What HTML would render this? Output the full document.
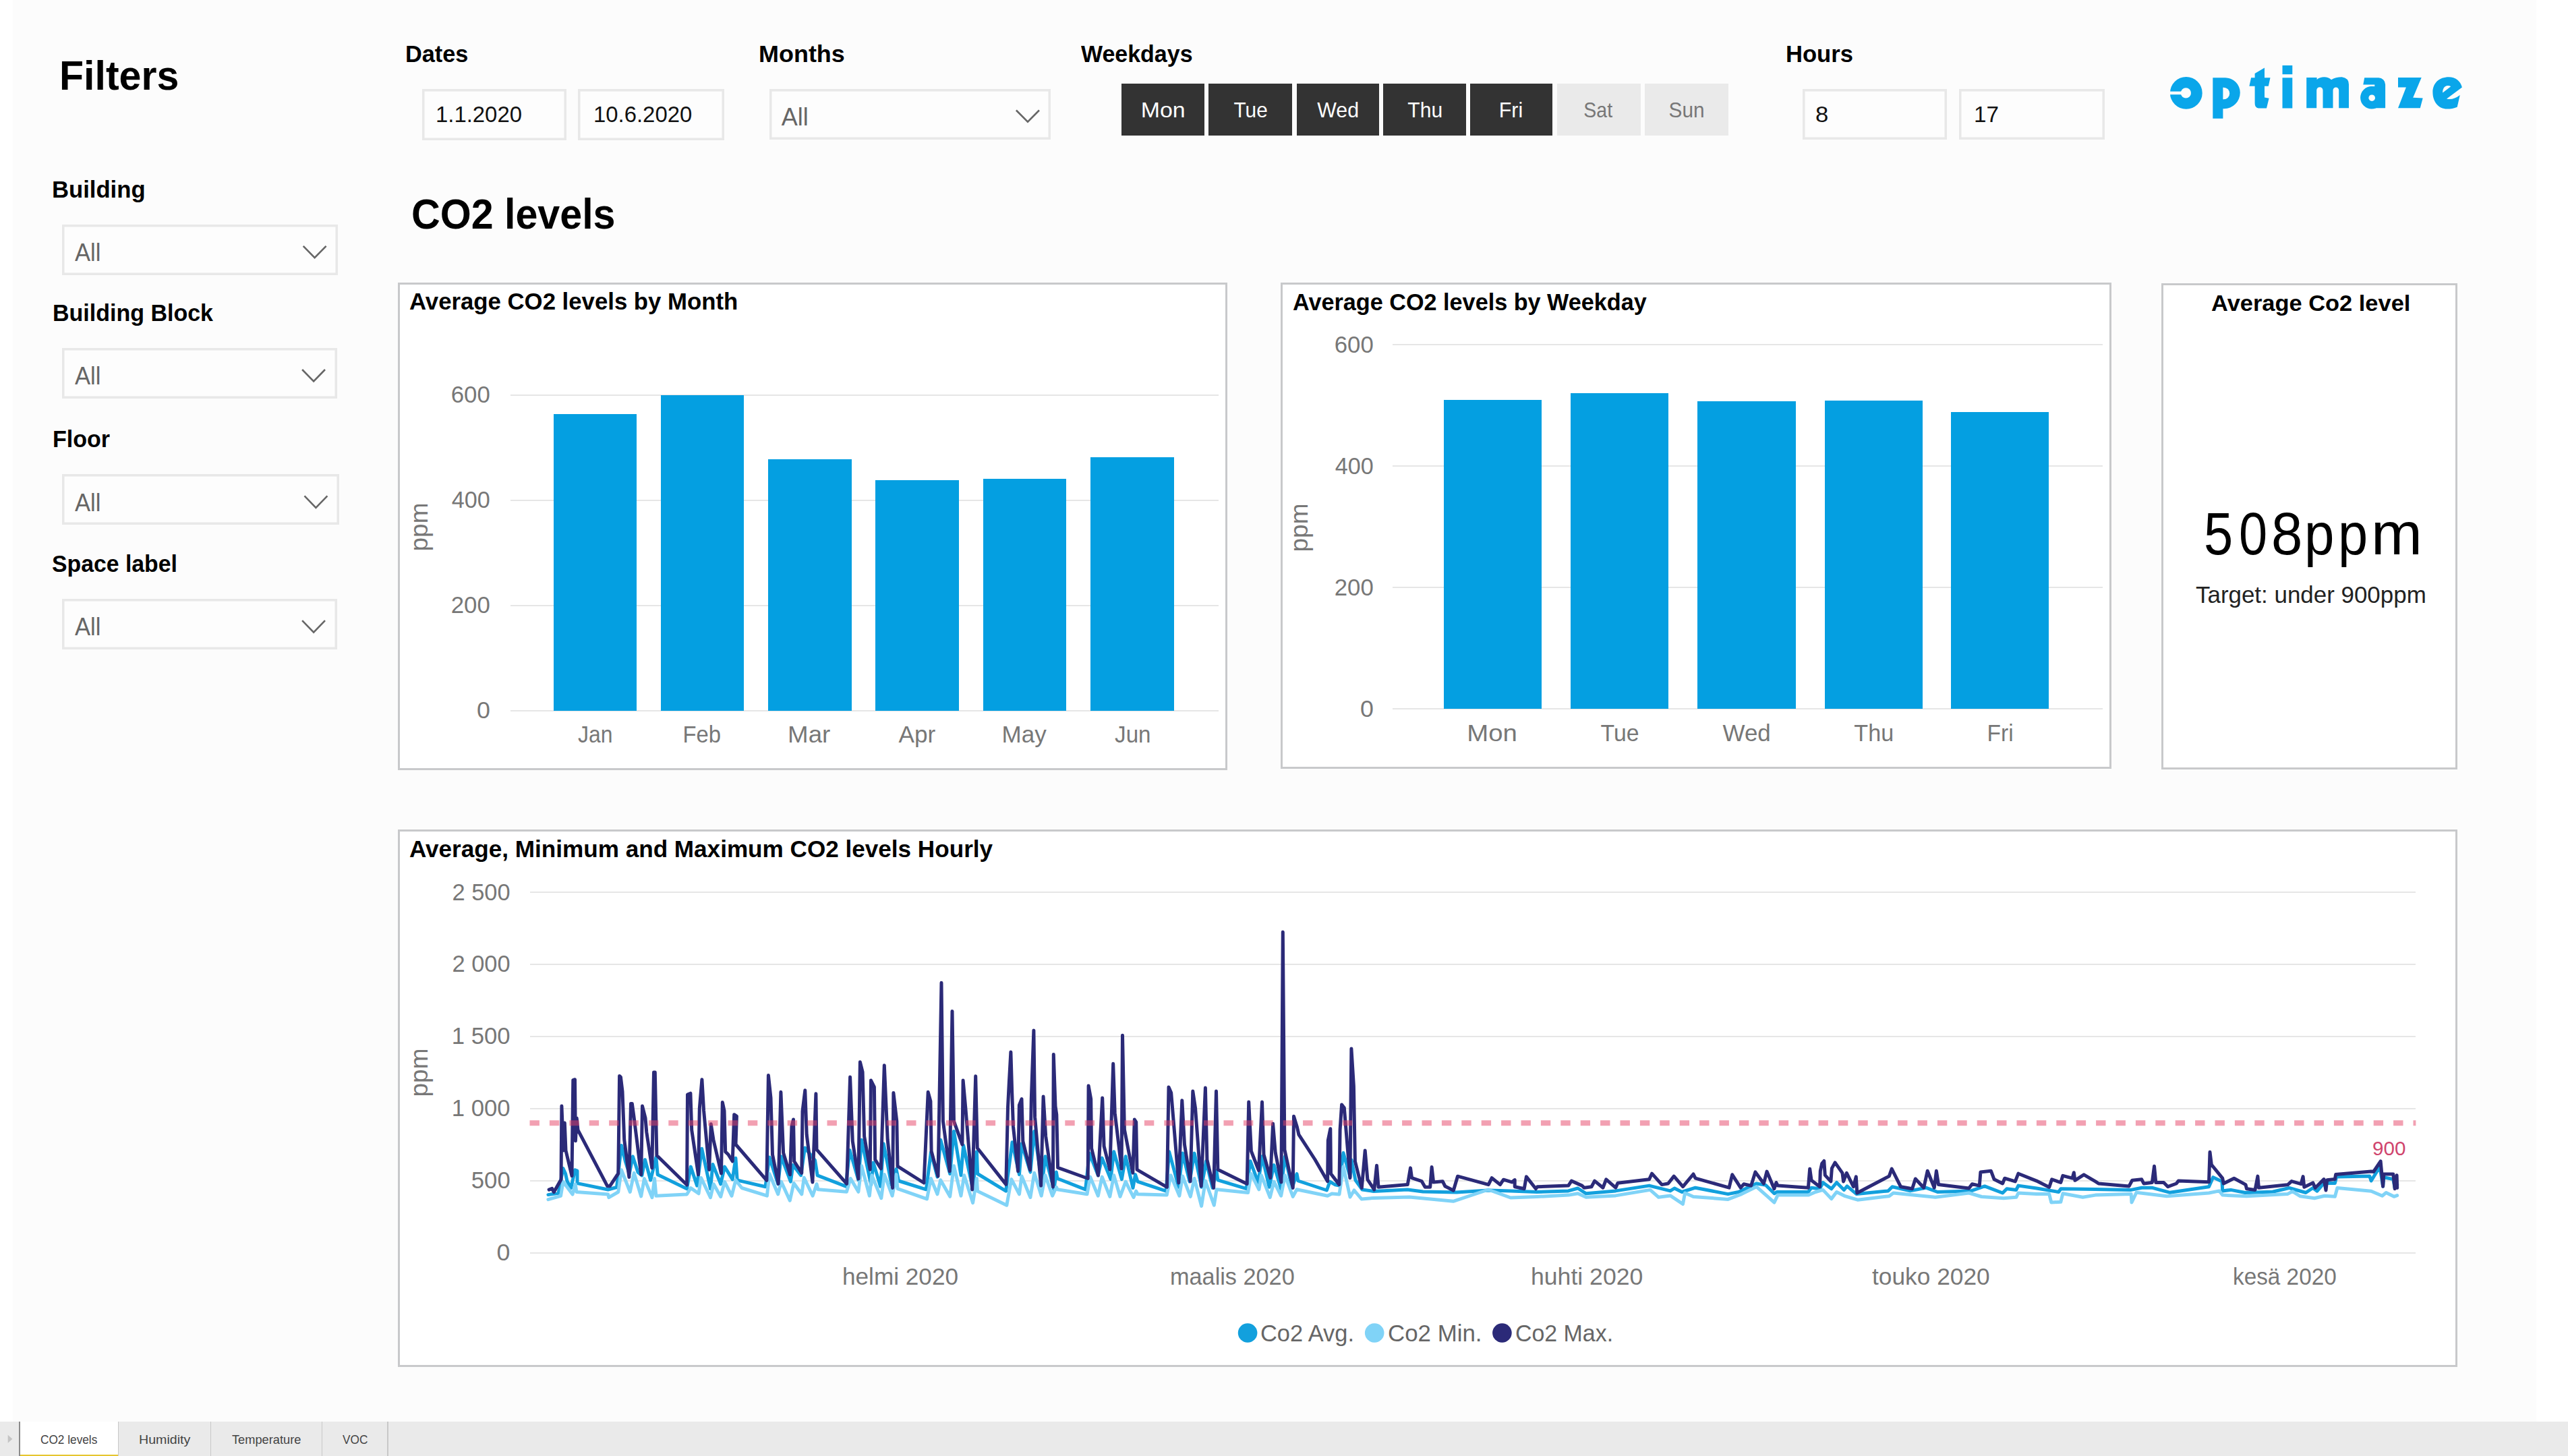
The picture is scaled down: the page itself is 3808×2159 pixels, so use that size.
<!DOCTYPE html>
<html><head><meta charset="utf-8"><title>CO2 levels</title>
<style>
html,body{margin:0;padding:0;}
body{width:3808px;height:2159px;position:relative;overflow:hidden;background:#ffffff;font-family:"Liberation Sans",sans-serif;}
.r{position:absolute;}
.t{position:absolute;line-height:1;white-space:nowrap;}
.t span{display:inline-block;}
svg.ov{position:absolute;left:0;top:0;}
</style></head><body>
<div class="r" style="left:19.0px;top:0.0px;width:3742.0px;height:2108.0px;background:#fcfcfc;"></div>
<div class="t" id="t_filters" style="left:88.3px;top:81.7px;font-size:60.60px;font-weight:700;color:#000;"><span style="transform:scaleX(0.9750);transform-origin:left;">Filters</span></div>
<div class="t" id="t_dates" style="left:601.3px;top:63.4px;font-size:35.50px;font-weight:700;color:#000;"><span style="transform:scaleX(0.9656);transform-origin:left;">Dates</span></div>
<div class="t" id="t_months" style="left:1125.4px;top:63.1px;font-size:35.50px;font-weight:700;color:#000;"><span style="transform:scaleX(1.0131);transform-origin:left;">Months</span></div>
<div class="t" id="t_weekdays" style="left:1602.8px;top:63.2px;font-size:35.50px;font-weight:700;color:#000;"><span style="transform:scaleX(0.9567);transform-origin:left;">Weekdays</span></div>
<div class="t" id="t_hours" style="left:2648.1px;top:63.2px;font-size:35.50px;font-weight:700;color:#000;"><span style="transform:scaleX(0.9747);transform-origin:left;">Hours</span></div>
<div class="r" style="left:625.6px;top:131.7px;width:214.1px;height:75.9px;background:#fdfdfd;box-shadow:inset 0 0 0 3.5px #e8e8e8;"></div>
<div class="r" style="left:857.3px;top:131.7px;width:216.6px;height:75.9px;background:#fdfdfd;box-shadow:inset 0 0 0 3.5px #e8e8e8;"></div>
<div class="t" id="t_d1" style="left:645.8px;top:153.3px;font-size:33.80px;font-weight:400;color:#111;"><span style="transform:scaleX(0.9727);transform-origin:left;">1.1.2020</span></div>
<div class="t" id="t_d2" style="left:879.5px;top:153.3px;font-size:33.80px;font-weight:400;color:#111;"><span style="transform:scaleX(0.9728);transform-origin:left;">10.6.2020</span></div>
<div class="r" style="left:1141.3px;top:131.5px;width:416.3px;height:75.5px;background:#fdfdfd;box-shadow:inset 0 0 0 3.5px #e8e8e8;"></div>
<div class="t" id="t_mall" style="left:1158.8px;top:155.5px;font-size:36.00px;font-weight:400;color:#666;"><span style="">All</span></div>
<div class="r" style="left:1663.2px;top:123.6px;width:122.6px;height:77.6px;background:#333333;"></div>
<div class="t" id="t_day_Mon" style="left:724.5px;width:2000px;top:147.5px;text-align:center;font-size:31.60px;font-weight:400;color:#ffffff;"><span style="transform:scaleX(1.0737);transform-origin:center;">Mon</span></div>
<div class="r" style="left:1792.1px;top:123.6px;width:124.3px;height:77.6px;background:#333333;"></div>
<div class="t" id="t_day_Tue" style="left:854.4px;width:2000px;top:147.5px;text-align:center;font-size:31.60px;font-weight:400;color:#ffffff;"><span style="transform:scaleX(0.9423);transform-origin:center;">Tue</span></div>
<div class="r" style="left:1922.5px;top:123.6px;width:122.5px;height:77.6px;background:#333333;"></div>
<div class="t" id="t_day_Wed" style="left:984.5px;width:2000px;top:147.5px;text-align:center;font-size:31.60px;font-weight:400;color:#ffffff;"><span style="transform:scaleX(0.9613);transform-origin:center;">Wed</span></div>
<div class="r" style="left:2051.3px;top:123.6px;width:122.6px;height:77.6px;background:#333333;"></div>
<div class="t" id="t_day_Thu" style="left:1113.2px;width:2000px;top:147.5px;text-align:center;font-size:31.60px;font-weight:400;color:#ffffff;"><span style="transform:scaleX(0.9519);transform-origin:center;">Thu</span></div>
<div class="r" style="left:2180.1px;top:123.6px;width:122.4px;height:77.6px;background:#333333;"></div>
<div class="t" id="t_day_Fri" style="left:1240.6px;width:2000px;top:147.5px;text-align:center;font-size:31.60px;font-weight:400;color:#ffffff;"><span style="transform:scaleX(0.9625);transform-origin:center;">Fri</span></div>
<div class="r" style="left:2308.6px;top:123.6px;width:124.3px;height:77.6px;background:#eaeaea;"></div>
<div class="t" id="t_day_Sat" style="left:1369.7px;width:2000px;top:147.5px;text-align:center;font-size:31.60px;font-weight:400;color:#777777;"><span style="transform:scaleX(0.9000);transform-origin:center;">Sat</span></div>
<div class="r" style="left:2439.2px;top:123.6px;width:123.6px;height:77.6px;background:#eaeaea;"></div>
<div class="t" id="t_day_Sun" style="left:1501.0px;width:2000px;top:147.5px;text-align:center;font-size:31.60px;font-weight:400;color:#777777;"><span style="transform:scaleX(0.9423);transform-origin:center;">Sun</span></div>
<div class="r" style="left:2672.7px;top:131.8px;width:214.0px;height:75.5px;background:#fdfdfd;box-shadow:inset 0 0 0 3.5px #e8e8e8;"></div>
<div class="r" style="left:2904.7px;top:131.8px;width:215.9px;height:75.5px;background:#fdfdfd;box-shadow:inset 0 0 0 3.5px #e8e8e8;"></div>
<div class="t" id="t_h1" style="left:2691.6px;top:152.8px;font-size:33.80px;font-weight:400;color:#111;"><span style="transform:scaleX(1.0250);transform-origin:left;">8</span></div>
<div class="t" id="t_h2" style="left:2927.0px;top:152.8px;font-size:33.80px;font-weight:400;color:#111;"><span style="transform:scaleX(0.9824);transform-origin:left;">17</span></div>
<div class="t" id="t_building" style="left:77.4px;top:264.2px;font-size:35.50px;font-weight:700;color:#000;"><span style="transform:scaleX(0.9761);transform-origin:left;">Building</span></div>
<div class="t" id="t_bblock" style="left:77.5px;top:447.4px;font-size:35.50px;font-weight:700;color:#000;"><span style="transform:scaleX(0.9577);transform-origin:left;">Building Block</span></div>
<div class="t" id="t_floor" style="left:77.5px;top:634.2px;font-size:35.50px;font-weight:700;color:#000;"><span style="transform:scaleX(0.9593);transform-origin:left;">Floor</span></div>
<div class="t" id="t_space" style="left:77.3px;top:818.7px;font-size:35.50px;font-weight:700;color:#000;"><span style="transform:scaleX(0.9516);transform-origin:left;">Space label</span></div>
<div class="r" style="left:92.2px;top:332.6px;width:409.2px;height:75.7px;background:#fdfdfd;box-shadow:inset 0 0 0 3.5px #e8e8e8;"></div>
<div class="t" id="t_all0" style="left:111.0px;top:356.9px;font-size:36.00px;font-weight:400;color:#666;"><span style="transform:scaleX(0.9605);transform-origin:left;">All</span></div>
<div class="r" style="left:92.2px;top:515.8px;width:407.6px;height:75.2px;background:#fdfdfd;box-shadow:inset 0 0 0 3.5px #e8e8e8;"></div>
<div class="t" id="t_all1" style="left:111.0px;top:540.1px;font-size:36.00px;font-weight:400;color:#666;"><span style="transform:scaleX(0.9605);transform-origin:left;">All</span></div>
<div class="r" style="left:92.2px;top:703.2px;width:411.0px;height:75.1px;background:#fdfdfd;box-shadow:inset 0 0 0 3.5px #e8e8e8;"></div>
<div class="t" id="t_all2" style="left:111.0px;top:727.5px;font-size:36.00px;font-weight:400;color:#666;"><span style="transform:scaleX(0.9605);transform-origin:left;">All</span></div>
<div class="r" style="left:92.2px;top:888.0px;width:407.6px;height:74.8px;background:#fdfdfd;box-shadow:inset 0 0 0 3.5px #e8e8e8;"></div>
<div class="t" id="t_all3" style="left:111.0px;top:912.3px;font-size:36.00px;font-weight:400;color:#666;"><span style="transform:scaleX(0.9605);transform-origin:left;">All</span></div>
<div class="t" id="t_title" style="left:609.9px;top:286.4px;font-size:62.60px;font-weight:700;color:#000;"><span style="transform:scaleX(0.9449);transform-origin:left;">CO2 levels</span></div>
<div class="r" style="left:590.0px;top:419.0px;width:1230.0px;height:722.5px;background:#ffffff;box-shadow:inset 0 0 0 3px #c8c9cb;"></div>
<div class="t" id="t_c1title" style="left:606.8px;top:429.5px;font-size:34.90px;font-weight:700;color:#000;"><span style="transform:scaleX(0.9959);transform-origin:left;">Average CO2 levels by Month</span></div>
<div class="r" style="left:756.7px;top:585.0px;width:1050.8px;height:2.0px;background:#e6e6e6;"></div>
<div class="t" id="t_c1y600" style="left:-1273.0px;width:2000px;top:568.3px;text-align:right;font-size:35.80px;font-weight:400;color:#777777;"><span style="transform:scaleX(0.9719);transform-origin:right;">600</span></div>
<div class="r" style="left:756.7px;top:741.0px;width:1050.8px;height:2.0px;background:#e6e6e6;"></div>
<div class="t" id="t_c1y400" style="left:-1273.0px;width:2000px;top:724.3px;text-align:right;font-size:35.80px;font-weight:400;color:#777777;"><span style="transform:scaleX(0.9552);transform-origin:right;">400</span></div>
<div class="r" style="left:756.7px;top:897.0px;width:1050.8px;height:2.0px;background:#e6e6e6;"></div>
<div class="t" id="t_c1y200" style="left:-1273.0px;width:2000px;top:880.3px;text-align:right;font-size:35.80px;font-weight:400;color:#777777;"><span style="transform:scaleX(0.9719);transform-origin:right;">200</span></div>
<div class="r" style="left:756.7px;top:1053.0px;width:1050.8px;height:2.0px;background:#e6e6e6;"></div>
<div class="t" id="t_c1y0" style="left:-1273.0px;width:2000px;top:1036.3px;text-align:right;font-size:35.80px;font-weight:400;color:#777777;"><span style="">0</span></div>
<div class="r" style="left:820.6px;top:614.1px;width:123.1px;height:439.9px;background:#049fe1;"></div>
<div class="t" id="t_c1xJan" style="left:-117.2px;width:2000px;top:1072.1px;text-align:center;font-size:34.50px;font-weight:400;color:#777777;"><span style="transform:scaleX(0.9245);transform-origin:center;">Jan</span></div>
<div class="r" style="left:979.5px;top:585.6px;width:123.5px;height:468.4px;background:#049fe1;"></div>
<div class="t" id="t_c1xFeb" style="left:40.5px;width:2000px;top:1072.1px;text-align:center;font-size:34.50px;font-weight:400;color:#777777;"><span style="transform:scaleX(0.9500);transform-origin:center;">Feb</span></div>
<div class="r" style="left:1139.2px;top:681.3px;width:123.4px;height:372.7px;background:#049fe1;"></div>
<div class="t" id="t_c1xMar" style="left:199.7px;width:2000px;top:1072.1px;text-align:center;font-size:34.50px;font-weight:400;color:#777777;"><span style="transform:scaleX(1.0643);transform-origin:center;">Mar</span></div>
<div class="r" style="left:1298.0px;top:712.4px;width:123.8px;height:341.6px;background:#049fe1;"></div>
<div class="t" id="t_c1xApr" style="left:360.3px;width:2000px;top:1072.1px;text-align:center;font-size:34.50px;font-weight:400;color:#777777;"><span style="transform:scaleX(1.0189);transform-origin:center;">Apr</span></div>
<div class="r" style="left:1457.6px;top:710.3px;width:123.4px;height:343.7px;background:#049fe1;"></div>
<div class="t" id="t_c1xMay" style="left:518.1px;width:2000px;top:1072.1px;text-align:center;font-size:34.50px;font-weight:400;color:#777777;"><span style="transform:scaleX(1.0143);transform-origin:center;">May</span></div>
<div class="r" style="left:1617.2px;top:678.4px;width:123.5px;height:375.6px;background:#049fe1;"></div>
<div class="t" id="t_c1xJun" style="left:679.4px;width:2000px;top:1072.1px;text-align:center;font-size:34.50px;font-weight:400;color:#777777;"><span style="transform:scaleX(0.9623);transform-origin:center;">Jun</span></div>
<div class="t" style="left:520.9px;top:763.2px;width:200px;height:37px;text-align:center;font-size:37px;line-height:37px;color:#777777;transform:rotate(-90deg);">ppm</div>
<div class="r" style="left:1899.0px;top:419.0px;width:1232.0px;height:721.0px;background:#ffffff;box-shadow:inset 0 0 0 3px #c8c9cb;"></div>
<div class="t" id="t_c2title" style="left:1917.2px;top:430.5px;font-size:34.90px;font-weight:700;color:#000;"><span style="transform:scaleX(0.9804);transform-origin:left;">Average CO2 levels by Weekday</span></div>
<div class="r" style="left:2065.3px;top:510.2px;width:1052.5px;height:2.0px;background:#e6e6e6;"></div>
<div class="t" id="t_c2y600" style="left:37.0px;width:2000px;top:493.5px;text-align:right;font-size:35.80px;font-weight:400;color:#777777;"><span style="transform:scaleX(0.9719);transform-origin:right;">600</span></div>
<div class="r" style="left:2065.3px;top:690.2px;width:1052.5px;height:2.0px;background:#e6e6e6;"></div>
<div class="t" id="t_c2y400" style="left:36.9px;width:2000px;top:673.5px;text-align:right;font-size:35.80px;font-weight:400;color:#777777;"><span style="transform:scaleX(0.9552);transform-origin:right;">400</span></div>
<div class="r" style="left:2065.3px;top:870.3px;width:1052.5px;height:2.0px;background:#e6e6e6;"></div>
<div class="t" id="t_c2y200" style="left:37.0px;width:2000px;top:853.6px;text-align:right;font-size:35.80px;font-weight:400;color:#777777;"><span style="transform:scaleX(0.9719);transform-origin:right;">200</span></div>
<div class="r" style="left:2065.3px;top:1050.4px;width:1052.5px;height:2.0px;background:#e6e6e6;"></div>
<div class="t" id="t_c2y0" style="left:37.0px;width:2000px;top:1033.7px;text-align:right;font-size:35.80px;font-weight:400;color:#777777;"><span style="">0</span></div>
<div class="r" style="left:2141.0px;top:593.1px;width:145.0px;height:458.3px;background:#049fe1;"></div>
<div class="t" id="t_c2xMon" style="left:1212.9px;width:2000px;top:1070.2px;text-align:center;font-size:34.50px;font-weight:400;color:#777777;"><span style="transform:scaleX(1.1113);transform-origin:center;">Mon</span></div>
<div class="r" style="left:2328.8px;top:582.7px;width:145.2px;height:468.7px;background:#049fe1;"></div>
<div class="t" id="t_c2xTue" style="left:1401.8px;width:2000px;top:1070.2px;text-align:center;font-size:34.50px;font-weight:400;color:#777777;"><span style="transform:scaleX(0.9786);transform-origin:center;">Tue</span></div>
<div class="r" style="left:2516.5px;top:594.7px;width:146.2px;height:456.7px;background:#049fe1;"></div>
<div class="t" id="t_c2xWed" style="left:1590.2px;width:2000px;top:1070.2px;text-align:center;font-size:34.50px;font-weight:400;color:#777777;"><span style="transform:scaleX(1.0132);transform-origin:center;">Wed</span></div>
<div class="r" style="left:2705.5px;top:593.6px;width:145.1px;height:457.8px;background:#049fe1;"></div>
<div class="t" id="t_c2xThu" style="left:1778.6px;width:2000px;top:1070.2px;text-align:center;font-size:34.50px;font-weight:400;color:#777777;"><span style="transform:scaleX(0.9895);transform-origin:center;">Thu</span></div>
<div class="r" style="left:2893.4px;top:610.9px;width:145.1px;height:440.5px;background:#049fe1;"></div>
<div class="t" id="t_c2xFri" style="left:1965.8px;width:2000px;top:1070.2px;text-align:center;font-size:34.50px;font-weight:400;color:#777777;"><span style="transform:scaleX(0.9722);transform-origin:center;">Fri</span></div>
<div class="t" style="left:1826.4px;top:763.7px;width:200px;height:37px;text-align:center;font-size:37px;line-height:37px;color:#777777;transform:rotate(-90deg);">ppm</div>
<div class="r" style="left:3205.0px;top:419.8px;width:438.5px;height:721.2px;background:#ffffff;box-shadow:inset 0 0 0 3px #c8c9cb;"></div>
<div class="t" id="t_c3title" style="left:2427.2px;width:2000px;top:433.2px;text-align:center;font-size:33.50px;font-weight:700;color:#000;"><span style="transform:scaleX(1.0275);transform-origin:center;">Average Co2 level</span></div>
<div class="t" id="t_kpi0" style="left:3268.3px;top:746.9px;font-size:89.50px;font-weight:400;color:#000;"><span style="transform:scaleX(0.8667);transform-origin:left;">5</span></div>
<div class="t" id="t_kpi1" style="left:3320.3px;top:746.9px;font-size:89.50px;font-weight:400;color:#000;"><span style="transform:scaleX(0.8465);transform-origin:left;">0</span></div>
<div class="t" id="t_kpi2" style="left:3367.7px;top:746.9px;font-size:89.50px;font-weight:400;color:#000;"><span style="transform:scaleX(0.9310);transform-origin:left;">8</span></div>
<div class="t" id="t_kpi3" style="left:3417.4px;top:746.9px;font-size:89.50px;font-weight:400;color:#000;"><span style="transform:scaleX(0.8925);transform-origin:left;">p</span></div>
<div class="t" id="t_kpi4" style="left:3467.2px;top:746.9px;font-size:89.50px;font-weight:400;color:#000;"><span style="transform:scaleX(0.8878);transform-origin:left;">p</span></div>
<div class="t" id="t_kpi5" style="left:3515.9px;top:746.9px;font-size:89.50px;font-weight:400;color:#000;"><span style="transform:scaleX(1.0190);transform-origin:left;">m</span></div>
<div class="t" id="t_target" style="left:3256.4px;top:863.6px;font-size:35.00px;font-weight:400;color:#222;"><span style="transform:scaleX(0.9979);transform-origin:left;">Target: under 900ppm</span></div>
<div class="r" style="left:590.0px;top:1230.0px;width:3054.0px;height:797.0px;background:#ffffff;box-shadow:inset 0 0 0 3px #c8c9cb;"></div>
<div class="t" id="t_c4title" style="left:607.0px;top:1241.1px;font-size:35.30px;font-weight:700;color:#000;"><span style="transform:scaleX(0.9948);transform-origin:left;">Average, Minimum and Maximum CO2 levels Hourly</span></div>
<div class="r" style="left:785.5px;top:1322.2px;width:2796.9px;height:2.0px;background:#e6e6e6;"></div>
<div class="t" id="t_c4y2500" style="left:-1243.7px;width:2000px;top:1305.5px;text-align:right;font-size:35.80px;font-weight:400;color:#777777;"><span style="transform:scaleX(0.9616);transform-origin:right;">2 500</span></div>
<div class="r" style="left:785.5px;top:1429.1px;width:2796.9px;height:2.0px;background:#e6e6e6;"></div>
<div class="t" id="t_c4y2000" style="left:-1243.7px;width:2000px;top:1412.4px;text-align:right;font-size:35.80px;font-weight:400;color:#777777;"><span style="transform:scaleX(0.9616);transform-origin:right;">2 000</span></div>
<div class="r" style="left:785.5px;top:1536.0px;width:2796.9px;height:2.0px;background:#e6e6e6;"></div>
<div class="t" id="t_c4y1500" style="left:-1243.6px;width:2000px;top:1519.3px;text-align:right;font-size:35.80px;font-weight:400;color:#777777;"><span style="transform:scaleX(0.9694);transform-origin:right;">1 500</span></div>
<div class="r" style="left:785.5px;top:1642.9px;width:2796.9px;height:2.0px;background:#e6e6e6;"></div>
<div class="t" id="t_c4y1000" style="left:-1243.6px;width:2000px;top:1626.2px;text-align:right;font-size:35.80px;font-weight:400;color:#777777;"><span style="transform:scaleX(0.9694);transform-origin:right;">1 000</span></div>
<div class="r" style="left:785.5px;top:1749.8px;width:2796.9px;height:2.0px;background:#e6e6e6;"></div>
<div class="t" id="t_c4y500" style="left:-1243.6px;width:2000px;top:1733.1px;text-align:right;font-size:35.80px;font-weight:400;color:#777777;"><span style="transform:scaleX(0.9696);transform-origin:right;">500</span></div>
<div class="r" style="left:785.5px;top:1856.7px;width:2796.9px;height:2.0px;background:#e6e6e6;"></div>
<div class="t" id="t_c4y0" style="left:-1243.6px;width:2000px;top:1840.0px;text-align:right;font-size:35.80px;font-weight:400;color:#777777;"><span style="">0</span></div>
<div class="t" style="left:521.0px;top:1572.1px;width:200px;height:37px;text-align:center;font-size:37px;line-height:37px;color:#777777;transform:rotate(-90deg);">ppm</div>
<div class="t" id="t_x_helmi" style="left:1248.7px;top:1875.8px;font-size:34.50px;font-weight:400;color:#777777;"><span style="transform:scaleX(1.0194);transform-origin:left;">helmi 2020</span></div>
<div class="t" id="t_x_maalis" style="left:1734.8px;top:1875.8px;font-size:34.50px;font-weight:400;color:#777777;"><span style="transform:scaleX(0.9929);transform-origin:left;">maalis 2020</span></div>
<div class="t" id="t_x_huhti" style="left:2269.5px;top:1875.8px;font-size:34.50px;font-weight:400;color:#777777;"><span style="transform:scaleX(1.0318);transform-origin:left;">huhti 2020</span></div>
<div class="t" id="t_x_touko" style="left:2775.6px;top:1875.8px;font-size:34.50px;font-weight:400;color:#777777;"><span style="transform:scaleX(1.0231);transform-origin:left;">touko 2020</span></div>
<div class="t" id="t_x_kesa" style="left:3311.3px;top:1875.8px;font-size:34.50px;font-weight:400;color:#777777;"><span style="transform:scaleX(0.9654);transform-origin:left;">kes&auml; 2020</span></div>
<div class="t" id="t_900" style="left:3518.0px;top:1688.2px;font-size:30.00px;font-weight:400;color:#d0456e;"><span style="transform:scaleX(0.9875);transform-origin:left;">900</span></div>
<div class="t" id="t_lg1" style="left:1869.0px;top:1959.0px;font-size:35.00px;font-weight:400;color:#666;"><span style="transform:scaleX(0.9832);transform-origin:left;">Co2 Avg.</span></div>
<div class="t" id="t_lg2" style="left:2058.0px;top:1959.0px;font-size:35.00px;font-weight:400;color:#666;"><span style="transform:scaleX(0.9963);transform-origin:left;">Co2 Min.</span></div>
<div class="t" id="t_lg3" style="left:2247.4px;top:1959.0px;font-size:35.00px;font-weight:400;color:#666;"><span style="transform:scaleX(0.9685);transform-origin:left;">Co2 Max.</span></div>
<div class="r" style="left:0.0px;top:2108.0px;width:3808.0px;height:51.0px;background:#eaeaea;"></div>
<div class="r" style="left:30.0px;top:2108.0px;width:144.5px;height:51.0px;background:#ffffff;"></div>
<div class="r" style="left:30.0px;top:2157.0px;width:144.5px;height:2.0px;background:#e6c62e;"></div>
<div class="r" style="left:28.0px;top:2108.0px;width:2.0px;height:51.0px;background:#8a8a8a;"></div>
<div class="r" style="left:174.5px;top:2108.0px;width:1.5px;height:51.0px;background:#c8c8c8;"></div>
<div class="r" style="left:311.5px;top:2108.0px;width:1.5px;height:51.0px;background:#c8c8c8;"></div>
<div class="r" style="left:476.5px;top:2108.0px;width:1.5px;height:51.0px;background:#c8c8c8;"></div>
<div class="r" style="left:574.0px;top:2108.0px;width:1.5px;height:51.0px;background:#c8c8c8;"></div>
<div class="t" id="t_tab1" style="left:60.2px;top:2126.2px;font-size:18.40px;font-weight:400;color:#444;"><span style="transform:scaleX(0.9371);transform-origin:left;">CO2 levels</span></div>
<div class="t" id="t_tab2" style="left:205.7px;top:2126.2px;font-size:18.40px;font-weight:400;color:#444;"><span style="transform:scaleX(1.0671);transform-origin:left;">Humidity</span></div>
<div class="t" id="t_tab3" style="left:343.8px;top:2126.2px;font-size:18.40px;font-weight:400;color:#444;"><span style="transform:scaleX(0.9922);transform-origin:left;">Temperature</span></div>
<div class="t" id="t_tab4" style="left:507.8px;top:2126.2px;font-size:18.40px;font-weight:400;color:#444;"><span style="transform:scaleX(0.9368);transform-origin:left;">VOC</span></div>
<svg class="ov" width="3808" height="2159" viewBox="0 0 3808 2159">
<polyline points="1506.9,163.5 1524.0,180.6 1541.0,163.5" fill="none" stroke="#666" stroke-width="2.6"/>
<circle cx="3241.8" cy="137.9" r="23.9" fill="#0aa6ea"/>
<circle cx="3241.4" cy="137.9" r="7.6" fill="#fcfcfc"/>
<rect x="3214" y="135.6" width="27.5" height="4.6" fill="#fcfcfc"/>
<path d="M3281.3,115.3 H3299.8 A22,22 0 0 1 3321.8,137.3 A24,24 0 0 1 3297.8,161.3 H3296.4 V175.7 H3281.3 Z" fill="#0aa6ea"/>
<path d="M3296.4,129.7 H3297.5 A8.75,8.75 0 0 1 3297.5,147.2 H3296.4 Z" fill="#fcfcfc"/>
<path d="M3343.6,109.1 L3358,100.5 L3358,115.3 L3366.5,115.3 L3363.8,127.8 L3358,127.8 L3358,144.5 L3364.6,145.7 L3361,160.5 L3349,160.5 Q3343.6,160 3343.6,153 L3343.6,127.8 L3335.4,127.8 L3338.1,115.3 L3343.6,115.3 Z" fill="#0aa6ea"/>
<rect x="3384.5" y="115.3" width="14.8" height="45.2" fill="#0aa6ea"/>
<rect x="3384.5" y="97" width="14.8" height="13.2" fill="#0aa6ea"/>
<path d="M3420.2,115 H3435.6 V117.9 Q3440,114.2 3446.3,114.2 Q3453,114.2 3457,118.3 Q3463,114.2 3472.7,114.2 Q3483,115.5 3483,125.3 V160.3 H3468.2 V133.9 A4.35,4.35 0 0 0 3459.5,133.9 V160.3 H3444.5 V133.9 A4.65,4.65 0 0 0 3435.2,133.9 V160.3 H3420.2 Z" fill="#0aa6ea"/>
<path d="M3506.2,115.3 H3527.1 A10,10 0 0 1 3537.1,125.3 V160.3 H3521.3 V125.6 H3504.3 Z" fill="#0aa6ea"/>
<circle cx="3516.8" cy="144.8" r="16.7" fill="#0aa6ea"/>
<rect x="3515" y="128.2" width="8" height="32.1" fill="#0aa6ea"/>
<circle cx="3517.2" cy="145.2" r="4.8" fill="#fcfcfc"/>
<path d="M3556,115 L3590.7,115 L3578.2,144.8 L3592.7,145.5 L3588.8,160.3 L3556,160.3 L3567.9,129.4 L3556,129.4 Z" fill="#0aa6ea"/>
<path d="M3650.9,129.4 L3628,146.5 Q3637.5,148.8 3647.8,141 L3643.7,158.7 C3639,160.8 3634,161.6 3628.8,161.6 C3616,161.6 3607.4,151 3607.4,136.8 C3607.4,123 3617,114.2 3631.3,114.2 C3641,114.2 3648.5,120 3650.9,129.4 Z" fill="#0aa6ea"/>
<path d="M3622.2,137.5 C3621.8,132 3624.5,127.2 3629.7,126.9 Q3632.5,126.8 3634.2,128.2 Z" fill="#fcfcfc"/>
<polyline points="449.7,364.8 466.6,382.2 483.6,364.8" fill="none" stroke="#666" stroke-width="2.6"/>
<polyline points="448.1,548.0 465.1,565.4 482.0,548.0" fill="none" stroke="#666" stroke-width="2.6"/>
<polyline points="451.5,735.4 468.4,752.8 485.4,735.4" fill="none" stroke="#666" stroke-width="2.6"/>
<polyline points="448.1,920.2 465.1,937.6 482.0,920.2" fill="none" stroke="#666" stroke-width="2.6"/>
<polyline points="812.9,1771.6 828.0,1769.2 835.0,1732.4 838.6,1740.6 840.9,1751.1 846.7,1761.6 852.6,1734.8 856.0,1736.0 856.0,1754.6 901.6,1764.0 914.5,1760.5 921.5,1698.6 927.3,1721.9 933.2,1740.6 938.4,1714.9 946.0,1738.3 951.9,1743.0 956.5,1719.6 964.7,1750.0 972.9,1716.0 975.2,1741.8 1018.5,1762.8 1024.3,1730.1 1033.6,1758.1 1040.7,1703.2 1053.5,1762.8 1057.0,1726.6 1068.7,1755.8 1074.5,1730.1 1086.2,1748.8 1090.9,1717.2 1093.2,1750.0 1100.0,1751.6 1135.0,1759.7 1140.9,1715.9 1153.7,1755.7 1158.4,1714.8 1172.4,1752.1 1175.9,1727.6 1187.6,1742.8 1193.5,1701.9 1208.6,1720.6 1212.1,1742.8 1254.2,1759.2 1260.0,1705.4 1272.9,1749.8 1277.6,1690.2 1291.6,1756.8 1295.1,1724.1 1305.6,1759.2 1310.3,1696.1 1322.0,1756.8 1329.0,1733.5 1332.5,1751.0 1373.4,1763.8 1380.4,1708.9 1390.0,1745.1 1394.7,1690.2 1408.7,1740.5 1414.5,1677.4 1425.0,1742.8 1428.6,1698.4 1442.6,1762.7 1448.4,1707.8 1449.6,1740.5 1491.6,1766.2 1501.0,1693.7 1511.5,1741.6 1515.0,1696.1 1527.9,1738.1 1533.7,1677.4 1545.4,1755.7 1550.0,1714.8 1562.9,1763.8 1566.4,1738.1 1568.0,1747.5 1609.6,1763.8 1615.5,1710.1 1628.3,1742.8 1634.2,1717.1 1647.0,1748.6 1651.7,1707.8 1663.4,1748.6 1669.2,1714.8 1680.0,1761.5 1683.5,1741.6 1687.0,1752.1 1729.1,1766.2 1733.7,1707.8 1747.8,1760.3 1753.6,1710.1 1764.1,1752.1 1771.1,1710.1 1781.6,1760.3 1788.6,1721.8 1798.0,1761.5 1803.8,1735.8 1806.0,1749.8 1848.2,1762.7 1854.1,1721.8 1865.7,1753.3 1871.6,1714.8 1882.1,1760.3 1889.1,1727.6 1899.6,1762.7 1905.5,1714.8 1916.0,1761.5 1923.0,1740.5 1925.0,1751.0 1967.4,1765.0 1972.0,1752.1 1980.0,1756.8 1986.0,1758.0 1992.0,1709.6 2002.0,1745.0 2004.0,1720.0 2010.0,1750.0 2020.0,1764.0 2037.0,1766.5 2087.0,1764.0 2110.0,1767.0 2160.0,1768.0 2207.0,1765.0 2240.0,1766.0 2279.0,1767.5 2325.7,1765.9 2339.7,1762.0 2352.0,1769.8 2395.8,1765.9 2445.6,1758.1 2476.8,1765.9 2483.0,1762.0 2494.0,1767.5 2514.0,1761.2 2562.4,1770.6 2578.0,1767.5 2604.5,1755.0 2618.5,1757.4 2631.0,1769.8 2634.7,1767.5 2681.4,1767.5 2686.0,1761.2 2698.5,1762.8 2703.2,1753.5 2715.7,1762.8 2723.5,1753.5 2734.4,1764.4 2739.0,1758.9 2753.0,1770.6 2799.8,1765.9 2806.0,1759.7 2832.5,1765.9 2855.9,1761.2 2873.0,1767.5 2922.8,1765.9 2943.0,1758.9 2969.6,1769.0 2975.8,1762.8 2989.8,1764.4 2992.9,1758.1 3020.0,1762.0 3052.7,1767.5 3056.0,1762.8 3107.0,1763.6 3160.2,1764.4 3176.0,1761.2 3191.0,1761.2 3217.8,1768.3 3275.5,1759.7 3281.7,1745.7 3295.0,1751.9 3295.7,1765.9 3308.0,1764.4 3329.2,1768.5 3370.0,1767.3 3394.6,1761.5 3419.2,1768.5 3429.7,1761.5 3436.0,1766.2 3446.0,1754.5 3462.4,1754.5 3464.7,1745.1 3513.8,1744.0 3516.1,1751.0 3529.0,1730.0 3533.6,1759.2 3534.8,1745.7 3548.8,1748.6 3551.2,1761.5 3554.7,1756.8" fill="none" stroke="#12a0dd" stroke-width="5" stroke-linejoin="round" stroke-linecap="round"/>
<polyline points="812.9,1778.6 831.5,1773.3 835.0,1752.3 849.0,1771.0 853.2,1755.8 854.9,1767.5 901.6,1771.0 902.8,1775.7 916.8,1767.5 921.5,1734.8 934.3,1767.5 940.2,1739.4 950.7,1773.9 955.4,1747.6 967.0,1775.7 970.6,1747.6 972.9,1773.3 1018.5,1771.0 1024.3,1761.6 1036.0,1769.8 1039.5,1746.4 1053.5,1775.7 1058.2,1755.8 1068.7,1774.5 1074.5,1752.3 1085.0,1773.3 1090.9,1750.0 1100.0,1761.5 1137.4,1773.2 1140.9,1740.5 1153.7,1770.8 1158.4,1752.1 1171.3,1780.2 1177.1,1754.5 1188.8,1770.8 1192.3,1746.3 1205.1,1773.2 1211.0,1755.7 1213.0,1763.8 1255.4,1767.3 1261.2,1747.5 1272.9,1767.3 1277.6,1728.8 1289.3,1773.2 1292.8,1742.8 1306.8,1776.7 1311.4,1741.6 1323.1,1773.2 1329.0,1741.6 1331.0,1762.7 1374.5,1777.9 1380.4,1747.5 1390.0,1770.8 1394.7,1749.8 1408.7,1774.3 1414.5,1728.8 1425.0,1773.2 1429.7,1742.8 1442.6,1783.7 1448.4,1747.5 1449.6,1766.2 1492.8,1787.2 1499.8,1748.6 1511.5,1770.8 1515.0,1744.0 1527.9,1775.5 1533.7,1739.3 1544.2,1773.2 1550.0,1742.8 1560.6,1773.2 1566.4,1760.3 1568.0,1763.8 1612.0,1770.8 1616.6,1745.1 1628.3,1773.2 1634.2,1745.1 1645.8,1774.3 1651.7,1742.8 1661.0,1774.3 1669.2,1752.1 1680.9,1775.5 1684.7,1766.2 1687.0,1770.8 1730.2,1772.0 1736.1,1742.8 1748.9,1773.2 1753.6,1744.0 1765.3,1774.3 1771.1,1747.5 1781.6,1788.4 1787.5,1751.0 1800.3,1787.2 1804.0,1763.8 1850.6,1768.5 1855.2,1740.5 1866.9,1763.8 1870.4,1742.8 1883.3,1775.5 1889.1,1752.1 1899.6,1773.2 1905.5,1742.8 1917.2,1774.3 1923.0,1763.8 1968.6,1773.2 1975.0,1770.0 1986.0,1771.0 1992.0,1730.0 2002.0,1775.0 2008.0,1765.0 2019.0,1778.0 2037.0,1776.4 2090.0,1775.0 2155.0,1781.3 2207.0,1764.0 2240.0,1776.0 2279.0,1774.5 2326.0,1772.1 2339.7,1769.8 2352.0,1775.3 2395.8,1772.9 2447.0,1764.4 2459.5,1775.3 2476.8,1772.9 2495.5,1785.4 2498.6,1769.0 2511.0,1774.5 2562.4,1778.4 2582.6,1770.6 2604.5,1759.7 2631.0,1783.0 2636.2,1772.1 2681.4,1772.1 2692.3,1767.5 2703.2,1764.4 2715.7,1777.6 2723.5,1767.5 2736.0,1773.7 2754.6,1779.2 2801.3,1773.7 2807.6,1769.0 2869.9,1775.3 2919.7,1769.0 2938.4,1774.5 2971.1,1776.8 2989.8,1775.3 2992.9,1769.0 3020.0,1770.6 3038.7,1770.6 3041.8,1783.0 3055.8,1782.3 3058.9,1769.8 3088.5,1775.3 3107.2,1772.1 3160.2,1770.6 3161.0,1783.0 3168.0,1768.3 3213.0,1773.7 3275.5,1769.0 3291.0,1765.9 3295.7,1772.1 3331.5,1773.7 3392.0,1770.6 3399.3,1766.7 3411.0,1773.8 3432.0,1776.7 3447.0,1773.2 3462.4,1774.3 3465.9,1761.5 3516.1,1766.2 3532.5,1773.2 3538.3,1768.5 3550.0,1774.3 3554.7,1772.6" fill="none" stroke="#80d3f7" stroke-width="5" stroke-linejoin="round" stroke-linecap="round"/>
<polyline points="814.1,1764.1 818.6,1762.3 821.3,1767.7 832.0,1749.0 832.9,1640.0 835.5,1706.0 837.3,1665.0 839.0,1706.0 848.0,1743.6 849.8,1601.6 852.5,1600.7 853.4,1691.8 855.2,1657.9 857.0,1675.7 900.7,1758.8 904.3,1758.8 916.8,1740.0 918.6,1595.4 920.4,1597.0 923.0,1618.6 925.7,1690.0 932.9,1745.4 935.5,1636.4 937.3,1636.4 940.0,1656.0 950.7,1741.8 952.5,1640.0 957.0,1657.9 958.8,1679.0 966.8,1732.0 969.5,1590.0 971.3,1590.0 973.9,1713.2 1018.6,1757.0 1019.5,1623.0 1023.9,1621.2 1025.7,1675.7 1035.5,1741.8 1037.3,1643.6 1040.9,1600.7 1043.6,1647.0 1051.6,1734.6 1054.3,1666.8 1057.9,1690.0 1069.5,1740.0 1071.3,1634.6 1074.0,1647.0 1075.7,1707.9 1080.0,1712.0 1086.2,1722.0 1088.7,1652.7 1092.4,1655.0 1091.0,1697.0 1136.9,1750.4 1139.4,1594.6 1143.0,1628.0 1145.5,1712.0 1154.2,1755.4 1157.9,1619.3 1161.6,1709.6 1171.5,1741.8 1174.0,1670.0 1176.5,1660.0 1177.7,1722.0 1188.8,1739.3 1190.0,1647.8 1193.8,1616.8 1196.2,1682.4 1204.9,1752.9 1209.9,1621.8 1211.0,1704.7 1255.6,1755.4 1260.6,1597.0 1264.3,1692.3 1272.9,1748.0 1275.4,1574.8 1279.1,1589.6 1281.6,1684.9 1290.2,1734.3 1291.5,1602.0 1296.4,1611.9 1297.7,1719.5 1306.3,1733.0 1311.3,1579.7 1316.2,1689.8 1323.6,1761.5 1324.9,1620.6 1329.8,1662.6 1331.0,1729.4 1370.0,1754.0 1376.2,1619.3 1379.9,1633.0 1381.1,1707.0 1391.0,1744.2 1396.0,1457.3 1398.4,1662.6 1408.3,1736.8 1412.0,1499.4 1414.5,1662.6 1426.9,1697.2 1428.1,1602.0 1431.8,1642.8 1441.7,1764.0 1446.7,1595.8 1449.2,1702.2 1491.8,1756.4 1494.5,1642.1 1496.3,1606.4 1498.9,1560.0 1500.7,1620.7 1502.5,1670.7 1509.6,1736.8 1511.4,1638.6 1515.0,1629.6 1516.8,1692.1 1527.5,1735.0 1529.3,1629.6 1532.9,1527.9 1534.6,1656.4 1543.6,1758.2 1547.1,1626.1 1550.7,1685.0 1561.4,1760.0 1562.3,1563.6 1565.0,1640.4 1566.8,1652.9 1568.6,1731.4 1613.2,1747.5 1614.1,1610.0 1617.7,1629.6 1618.6,1702.9 1628.5,1743.0 1634.7,1628.0 1637.1,1699.7 1645.8,1734.3 1650.7,1577.3 1653.2,1650.2 1663.1,1733.0 1664.5,1535.2 1667.4,1675.0 1679.8,1739.3 1682.3,1660.0 1684.7,1663.8 1686.0,1734.3 1730.5,1760.3 1733.0,1611.9 1736.7,1620.6 1747.8,1754.0 1752.8,1631.7 1756.5,1697.2 1765.1,1751.7 1768.8,1618.0 1772.5,1642.8 1781.2,1759.0 1787.4,1613.0 1789.9,1719.5 1799.7,1761.5 1803.5,1618.0 1805.9,1734.3 1849.2,1755.4 1851.7,1634.0 1855.4,1707.0 1866.5,1735.6 1871.5,1634.0 1874.0,1712.0 1883.8,1746.7 1887.6,1666.3 1891.3,1709.6 1899.9,1752.9 1902.3,1382.0 1904.9,1704.7 1917.2,1761.5 1918.5,1655.2 1923.4,1671.3 1925.9,1682.4 1950.0,1719.5 1968.6,1751.7 1969.3,1691.0 1972.8,1673.7 1973.5,1740.5 1985.9,1756.6 1987.1,1675.0 1989.6,1637.9 1993.3,1642.8 2001.9,1746.7 2003.9,1555.0 2007.4,1610.7 2009.4,1722.0 2019.3,1761.5 2024.2,1705.9 2027.9,1749.2 2037.8,1764.0 2041.5,1728.2 2044.0,1760.3 2087.3,1756.6 2091.5,1731.9 2093.5,1746.7 2108.3,1751.7 2113.2,1760.3 2120.7,1760.3 2123.1,1730.6 2125.6,1752.9 2139.2,1751.7 2142.9,1759.0 2155.3,1765.2 2161.5,1744.2 2207.2,1756.6 2212.2,1746.7 2224.5,1756.6 2229.5,1749.2 2241.9,1752.9 2246.2,1749.6 2246.2,1759.7 2260.2,1762.8 2263.4,1744.9 2277.4,1762.8 2279.7,1759.7 2325.7,1758.1 2330.3,1751.1 2345.9,1758.1 2349.0,1761.2 2360.0,1759.7 2364.6,1751.1 2377.0,1761.2 2381.7,1748.8 2395.8,1761.2 2398.9,1754.2 2445.6,1748.8 2449.5,1740.2 2464.3,1756.6 2473.6,1755.0 2482.2,1744.1 2495.5,1759.7 2511.0,1741.0 2514.1,1747.2 2564.0,1761.2 2568.7,1741.8 2581.1,1761.2 2585.8,1755.8 2596.7,1758.1 2602.9,1737.9 2615.4,1755.0 2620.0,1737.1 2630.9,1762.8 2633.9,1753.5 2636.2,1758.1 2681.4,1761.2 2683.7,1733.2 2686.1,1750.3 2698.5,1759.7 2699.3,1736.3 2701.7,1725.4 2704.8,1721.5 2706.3,1742.6 2714.9,1751.9 2716.4,1732.4 2721.1,1723.9 2732.0,1739.4 2733.6,1751.9 2738.3,1739.4 2748.4,1759.7 2752.3,1744.9 2753.8,1769.0 2801.3,1744.1 2805.2,1733.2 2818.5,1759.7 2835.6,1762.8 2840.3,1748.0 2852.7,1761.2 2858.2,1736.3 2868.3,1761.2 2871.4,1736.3 2874.5,1756.6 2919.7,1762.0 2924.4,1755.8 2935.3,1758.1 2936.9,1737.9 2952.4,1736.3 2957.1,1748.8 2969.6,1755.0 2972.7,1747.2 2988.3,1751.9 2992.9,1740.2 3020.0,1751.1 3038.7,1760.5 3042.6,1748.8 3055.8,1753.5 3058.9,1743.3 3073.0,1747.2 3075.3,1738.7 3076.9,1750.3 3090.1,1741.8 3107.2,1751.9 3111.9,1755.0 3157.1,1758.9 3161.7,1750.3 3175.8,1748.8 3178.9,1755.0 3191.3,1753.5 3194.5,1729.3 3196.8,1753.5 3208.5,1753.5 3214.7,1759.7 3227.2,1755.0 3230.3,1751.1 3275.5,1752.7 3277.0,1708.3 3279.3,1727.0 3295.7,1747.2 3297.3,1755.0 3312.8,1747.2 3330.0,1756.6 3331.5,1762.8 3344.0,1764.4 3347.9,1744.1 3349.4,1761.2 3392.3,1756.8 3398.1,1751.6 3412.1,1755.7 3415.1,1744.6 3416.8,1760.3 3429.7,1753.9 3433.2,1761.5 3446.0,1748.6 3449.0,1765.0 3450.7,1749.8 3462.4,1748.6 3463.6,1741.6 3516.1,1737.0 3519.6,1737.5 3530.1,1721.8 3533.6,1759.2 3534.8,1741.0 3548.8,1741.0 3551.2,1762.7 3554.1,1742.8 3554.7,1761.5" fill="none" stroke="#2b2a78" stroke-width="5" stroke-linejoin="round" stroke-linecap="round"/>
<line x1="785.5" y1="1665.3" x2="3582.4" y2="1665.3" stroke="#e54165" stroke-opacity="0.5" stroke-width="8" stroke-dasharray="14.4 15"/>
<circle cx="1850.1" cy="1976.5" r="14.3" fill="#12a0dd"/>
<circle cx="2038.2" cy="1976.5" r="14.3" fill="#80d3f7"/>
<circle cx="2227.4" cy="1976.5" r="14.3" fill="#2b2a78"/>
<polygon points="11.7,2127.7 18.4,2133.7 11.7,2139.7" fill="#c4c4c4"/>
</svg>
</body></html>
